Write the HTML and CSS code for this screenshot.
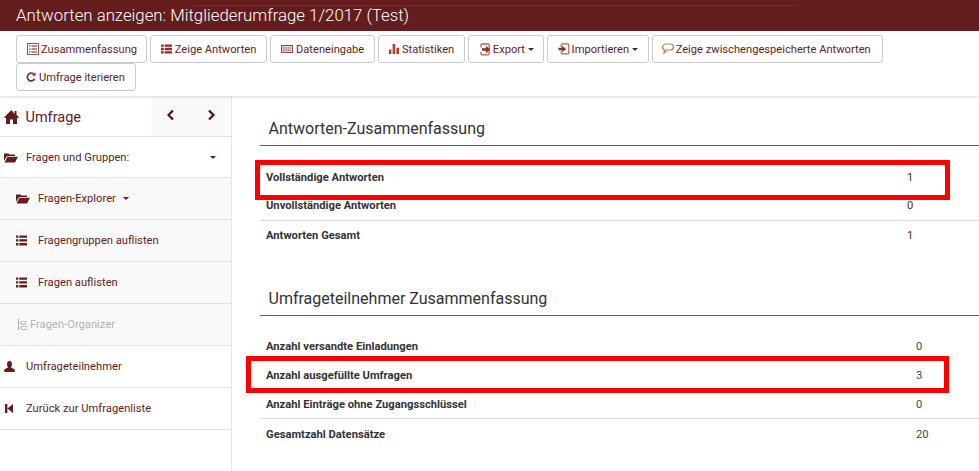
FILE: index.html
```html
<!DOCTYPE html>
<html lang="de">
<head>
<meta charset="utf-8">
<title>Antworten anzeigen</title>
<link rel="stylesheet" href="styles.css">
</head>
<body>
<header class="titlebar"><span class="titlebar-rule"></span><h1>Antworten anzeigen: Mitgliederumfrage 1/2017 (Test)</h1></header>
<nav class="toolbar">
  <a class="btn btn-sum"><svg class="ico" viewBox="0 0 12 12"><rect x="0.5" y="0.5" width="11" height="11" fill="none" stroke="#a8503c"/><path d="M2 3h1.500M4.500 3h5.500M2 6h1.500M4.500 6h5.500M2 9h1.500M4.500 9h5.500" stroke="#641c1c"/></svg>Zusammenfassung</a>
  <a class="btn"><svg class="ico ico-list" viewBox="0 0 12 10"><path d="M0 0h3v2.600H0zM4 0h8v2.600H4zM0 3.700h3v2.600H0zM4 3.700h8v2.600H4zM0 7.400h3V10H0zM4 7.400h8V10H4z" fill="#8c2f2a"/></svg>Zeige Antworten</a>
  <a class="btn"><svg class="ico ico-keys" viewBox="0 0 12 8"><rect x="0.500" y="0.500" width="11" height="7" fill="#e6d6d2" stroke="#8c4a44"/><path d="M2 3h8M2 5.200h8" stroke="#8c4a44" stroke-dasharray="1 .6"/></svg>Dateneingabe</a>
  <a class="btn"><svg class="ico ico-bars" viewBox="0 0 11 11"><path d="M0 6h2.600v5H0zM4 0h2.800v11H4zM8.200 4H11v7H8.200z" fill="#a8402e"/></svg>Statistiken</a>
  <a class="btn btn-export"><svg class="ico ico-doc" viewBox="0 0 11 13"><path d="M2 4.500V2.200Q2 1 3.200 1H9q1.200 0 1.200 1.200v8.400q0 1.200-1.200 1.200H3.200Q2 11.800 2 10.600V9" fill="none" stroke="#b8604c" stroke-width="1.300" transform="translate(-1 0)"/><path d="M2 5.200h4V3l4.300 3.500L6 10V7.800H2z" fill="#8c2f2a"/></svg>Export<i class="caret"></i></a>
  <a class="btn btn-import"><svg class="ico" viewBox="0 0 12 13"><path d="M3 4.500V2.200Q3 1 4.200 1H10q1.200 0 1.200 1.200v8.400q0 1.200-1.200 1.200H4.200Q3 11.800 3 10.600V9" fill="none" stroke="#b8604c" stroke-width="1.300"/><path d="M0 5.200h4V3l4.300 3.500L4 10V7.800H0z" fill="#8c2f2a"/></svg>Importieren<i class="caret"></i></a>
  <a class="btn btn-cached"><svg class="ico" viewBox="0 0 12 12"><path d="M3.500 1h5Q11.500 1 11.500 4T8.500 7H5L2 10 2.400 6.800Q.5 6 .5 4T3.500 1z" fill="none" stroke="#c07a4a" stroke-width="1.200"/></svg>Zeige zwischengespeicherte Antworten</a>
  <a class="btn btn-iter"><svg class="ico ico-bars" viewBox="0 0 12 12"><path d="M10 3.400A4.600 4.600 0 1 0 10.400 8" fill="none" stroke="#8c2f2a" stroke-width="2.100"/><path d="M7.200 4.600h4.300V.300z" fill="#8c2f2a"/></svg>Umfrage iterieren</a>
</nav>
<div class="layout">
  <aside class="sidebar">
    <div class="side-head">
      <div class="side-title"><svg class="home" viewBox="0 0 15 14"><path d="M7.500 0L0 7.200l1 1 1-.9V14h4V9.500h3V14h4V7.300l1 .9 1-1-2.500-2.400V1h-2v2.900z" fill="#641c1c"/></svg>Umfrage</div>
      <div class="side-arrows">
        <svg class="chev" viewBox="0 0 8 10"><path d="M6 .5L1.500 5 6 9.500" fill="none" stroke="#4a1414" stroke-width="2.200"/></svg>
        <svg class="chev" viewBox="0 0 8 10"><path d="M2 .5L6.500 5 2 9.500" fill="none" stroke="#4a1414" stroke-width="2.200"/></svg>
      </div>
    </div>
    <a class="side-row side-first"><svg class="side-ico" viewBox="0 0 14 10"><path d="M0 1h4.500l1 1H11v1.500H3L0 8.500zM3.500 4.200H14L11 10H0.600z" fill="#641c1c"/></svg><span class="grow">Fragen und Gruppen:</span><i class="caret caret-dark"></i></a>
    <a class="side-row sub"><svg class="side-ico" viewBox="0 0 14 10"><path d="M0 1h4.500l1 1H11v1.500H3L0 8.500zM3.500 4.200H14L11 10H0.600z" fill="#641c1c"/></svg>Fragen-Explorer<i class="caret caret-dark caret-gap"></i></a>
    <a class="side-row sub"><svg class="side-ico side-ico-sq" viewBox="0 0 11 10"><path d="M0 0h2.300v2.300H0zM3.300 0H11v2.300H3.300zM0 3.800h2.300v2.300H0zM3.300 3.800H11v2.300H3.300zM0 7.600h2.300V10H0zM3.300 7.600H11V10H3.300z" fill="#641c1c"/></svg>Fragengruppen auflisten</a>
    <a class="side-row sub"><svg class="side-ico side-ico-sq" viewBox="0 0 11 10"><path d="M0 0h2.300v2.300H0zM3.300 0H11v2.300H3.300zM0 3.800h2.300v2.300H0zM3.300 3.800H11v2.300H3.300zM0 7.600h2.300V10H0zM3.300 7.600H11V10H3.300z" fill="#641c1c"/></svg>Fragen auflisten</a>
    <a class="side-row sub off"><svg class="side-ico side-ico-org" viewBox="0 0 11 11"><path d="M1 0v11M1 4h3M1 9h3" fill="none" stroke="#b5b5b5"/><path d="M4 2.500h4.500v3H4zM4 7.500h5.500v3H4z" fill="none" stroke="#c4c4c4"/></svg>Fragen-Organizer</a>
    <a class="side-row"><svg class="side-ico side-ico-sq" viewBox="0 0 11 11"><path d="M5.500 0C7.300 0 8 1.500 8 3S7.200 6 7 6.500L10.800 8.600V11H.2V8.600L4 6.500C3.800 6 3 4.500 3 3S3.700 0 5.500 0z" fill="#641c1c"/></svg>Umfrageteilnehmer</a>
    <a class="side-row"><svg class="side-ico side-ico-back" viewBox="0 0 8 9"><path d="M0 0h2.400v9H0zM8 0v9L2.400 4.500z" fill="#641c1c"/></svg>Zurück zur Umfragenliste</a>
  </aside>
  <main class="content">
    <section class="panel">
      <h2>Antworten-Zusammenfassung</h2>
      <div class="stats">
        <div class="stat"><b>Vollständige Antworten</b><span>1</span></div>
        <div class="stat"><b>Unvollständige Antworten</b><span>0</span></div>
        <div class="stat"><b>Antworten Gesamt</b><span>1</span></div>
      </div>
    </section>
    <section class="panel panel-b">
      <h2>Umfrageteilnehmer Zusammenfassung</h2>
      <div class="stats">
        <div class="stat"><b>Anzahl versandte Einladungen</b><span>0</span></div>
        <div class="stat"><b>Anzahl ausgefüllte Umfragen</b><span>3</span></div>
        <div class="stat"><b>Anzahl Einträge ohne Zugangsschlüssel</b><span>0</span></div>
        <div class="stat"><b>Gesamtzahl Datensätze</b><span>20</span></div>
      </div>
    </section>
  </main>
</div>
<div class="mark mark-a"></div>
<div class="mark mark-b"></div>
</body>
</html>
```

FILE: styles.css
```css
* { box-sizing: border-box; }
html, body { margin: 0; height: 100%; overflow: hidden; }
body { position: relative; background: #fff; font-family: Roboto, "Liberation Sans", sans-serif; color: #641c1c; font-size: 12px; }
.titlebar { position: relative; height: 31px; background: #641c1c; padding-left: 16px; }
.titlebar-rule { position: absolute; left: 193px; top: 5px; width: 604px; height: 1px; background: #743030; }
.titlebar h1 { margin: 0; font-size: 16.800px; font-weight: 300; line-height: 30px; color: #fff; }
.toolbar { height: 65px; padding: 4px 16px 0; display: flex; flex-wrap: wrap; align-content: flex-start; column-gap: 2.600px; box-shadow: 0 1px 3px rgba(0,0,0,.15); position: relative; background: #fff; }
.btn { height: 28px; display: flex; align-items: center; padding: 0 10px; border: 1px solid #ccc; border-radius: 3px; font-size: 11.150px; white-space: nowrap; background: #fff; }
.btn-sum { padding-right: 9px; }
.btn-export { padding: 0 9px 0 11px; }
.btn-cached { padding: 0 11.500px 0 9px; }
.btn-iter { padding-left: 9px; }
.ico { width: 12px; height: 12px; margin-right: 2px; flex: none; }
.ico-list { width: 11px; margin-right: 3px; }
.ico-keys { margin-right: 3px; }
.ico-bars { width: 10px; margin-right: 3px; }
.ico-doc { width: 11px; height: 13px; }
.caret { display: inline-block; margin-left: 3px; width: 0; height: 0; border-top: 3px solid #641c1c; border-left: 3px solid transparent; border-right: 3px solid transparent; }
.caret-dark { border-top-color: #641c1c; }
.caret-gap { margin-left: 7px; }
.layout { display: flex; height: 375px; }
.sidebar { width: 232px; flex: none; border-right: 1px solid #e6e6e6; height: 100%; }
.side-head { height: 41px; display: flex; border-bottom: 1px solid #e2e2e2; }
.side-title { flex: 1; display: flex; align-items: center; padding: 3px 0 0 4px; font-size: 14.500px; gap: 6.500px; }
.home { width: 15px; height: 14px; margin-top: -2px; }
.side-arrows { width: 80px; display: flex; justify-content: space-between; padding: 14px 16px 0 16px; background: #fafafa; }
.chev { width: 8px; height: 10px; }
.side-row { height: 42px; display: flex; align-items: center; padding: 0 15px 0 4px; border-bottom: 1px solid #e2e2e2; font-size: 11.200px; }
.side-first { height: 41px; }
.side-row.sub { padding-left: 16px; background: #f9f9f9; }
.side-ico { width: 14px; height: 11px; margin-right: 8px; flex: none; }
.side-ico-sq { width: 11px; margin-right: 11px; }
.side-ico-org { margin-right: 0; }
.side-ico-back { width: 8px; height: 9px; margin: 0 13px 0 1px; }
.grow { flex: 1; }
.off { color: #b4b4b4; }
.content { flex: 1; padding: 17px 0 0 28px; }
.panel h2 { margin: 0 0 0 8.500px; font-size: 16px; font-weight: 400; line-height: 32px; color: #333; }
.stats { border-top: 1px solid #a04545; padding-top: 16.500px; }
.stat { display: flex; height: 29px; align-items: center; padding-left: 6px; font-size: 11.200px; }
.stat:first-child { height: 28.500px; padding-top: 1px; }
.stat:last-child { height: 30px; border-top: 1px solid #ddd; }
.stat b { font-weight: 700; color: #333; width: 641px; }
.stat span { color: #641c1c; }
.panel-b { margin-top: 33px; }
.panel-b .stats { padding-top: 16px; }
.panel-b .stat:first-child { height: 29px; padding-top: 0; }
.panel-b .stat:nth-child(3) { height: 28px; }
.panel-b .stat:last-child { height: 31px; }
.panel-b .stat b { width: 650px; }
.panel-b .stat span { color: #444; }
.mark { position: absolute; border: 5px solid #f00; }
.mark-a { left: 255px; top: 160px; width: 695px; height: 40px; }
.mark-b { left: 246px; top: 356px; width: 703px; height: 37px; }
```
